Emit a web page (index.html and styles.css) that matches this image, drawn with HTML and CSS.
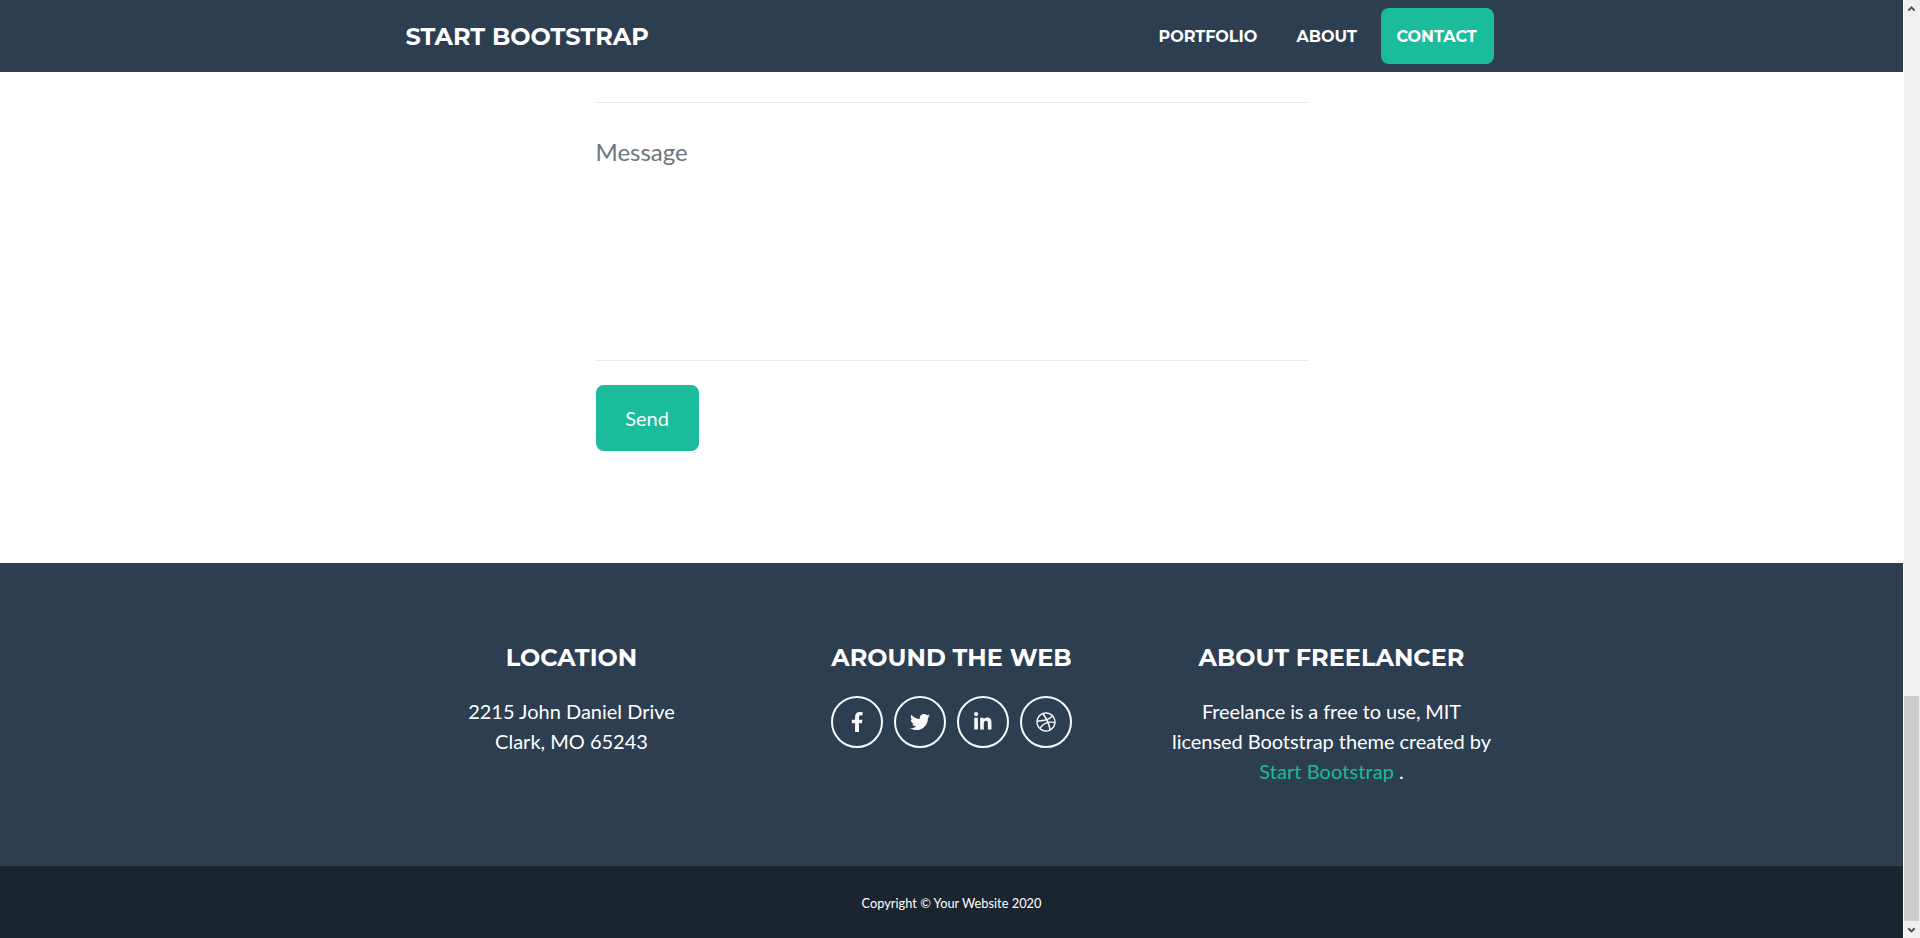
FILE: index.html
```
<!DOCTYPE html>
<html lang="en">
<head>
<meta charset="utf-8">
<title>Freelancer - Start Bootstrap</title>
<link rel="stylesheet" href="styles.css">
</head>
<body>
<div class="viewport">
<div class="page">
<header class="navbar">
<div class="container nav-row">
<a class="brand">START BOOTSTRAP</a>
<nav class="menu"><a class="nav-link portfolio">PORTFOLIO</a><a class="nav-link about">ABOUT</a><a class="nav-link contact">CONTACT</a></nav>
</div>
</header>
<main class="form">
<div class="field-end"></div>
<div class="message">Message</div>
<button class="send">Send</button>
</main>
<footer class="footer">
<div class="container columns">
<section class="col"><h4 class="title location">LOCATION</h4><p class="lead">2215 John Daniel Drive<br>Clark, MO 65243</p></section>
<section class="col"><h4 class="title web">AROUND THE WEB</h4>
<div class="socials">
<a class="social"><svg class="icon" style="width:12.5px" viewBox="0 0 320 512"><path d="M279.14 288l14.22-92.66h-88.91v-60.13c0-25.35 12.42-50.06 52.24-50.06h40.42V6.26S260.43 0 225.36 0c-73.22 0-121.08 44.38-121.08 124.72v70.62H22.89V288h81.39v224h100.17V288z"/></svg></a>
<a class="social"><svg class="icon" style="width:20px" viewBox="0 0 512 512"><path d="M459.37 151.716c.325 4.548.325 9.097.325 13.645 0 138.72-105.583 298.558-298.558 298.558-59.452 0-114.68-17.219-161.137-47.106 8.447.974 16.568 1.299 25.34 1.299 49.055 0 94.213-16.568 130.274-44.832-46.132-.975-84.792-31.188-98.112-72.772 6.498.974 12.995 1.624 19.818 1.624 9.421 0 18.843-1.3 27.614-3.573-48.081-9.747-84.143-51.98-84.143-102.985v-1.299c13.969 7.797 30.214 12.67 47.431 13.319-28.264-18.843-46.781-51.005-46.781-87.391 0-19.492 5.197-37.36 14.294-52.954 51.655 63.675 129.3 105.258 216.365 109.807-1.624-7.797-2.599-15.918-2.599-24.04 0-57.828 46.782-104.934 104.934-104.934 30.213 0 57.502 12.67 76.67 33.137 23.715-4.548 46.456-13.32 66.599-25.34-7.798 24.366-24.366 44.833-46.132 57.827 21.117-2.273 41.584-8.122 60.426-16.243-14.292 20.791-32.161 39.308-52.628 54.253z"/></svg></a>
<a class="social"><svg class="icon" style="width:17.5px" viewBox="0 0 448 512"><path d="M100.28 448H7.4V148.9h92.88zM53.79 108.1C24.09 108.1 0 83.5 0 53.8a53.79 53.79 0 0 1 107.58 0c0 29.7-24.1 54.3-53.79 54.3zM447.9 448h-92.68V302.4c0-34.7-.7-79.2-48.29-79.2-48.29 0-55.69 37.7-55.69 76.7V448h-92.78V148.9h89.08v40.8h1.3c12.4-23.5 42.69-48.3 87.88-48.3 94 0 111.28 61.9 111.28 142.3V448z"/></svg></a>
<a class="social"><svg class="icon" style="width:20px" viewBox="0 0 512 512"><path d="M256 8C119.252 8 8 119.252 8 256s111.252 248 248 248 248-111.252 248-248S392.748 8 256 8zm163.97 114.366c29.503 36.046 47.369 81.957 47.835 131.955-6.984-1.477-77.018-15.682-147.502-6.818-5.752-14.041-11.181-26.393-18.617-41.614 78.321-31.977 113.818-77.482 118.284-83.523zM396.421 97.87c-3.81 5.427-35.697 48.286-111.021 76.519-34.712-63.776-73.185-116.168-79.04-124.008 67.176-16.193 137.966 1.27 190.061 47.489zm-230.48-33.25c5.585 7.659 43.438 60.116 78.537 122.509-99.087 26.313-186.36 25.934-195.834 25.809C62.38 147.205 106.678 92.573 165.941 64.62zM44.17 256.323c0-2.166.043-4.322.108-6.473 9.268.19 111.92 1.513 217.706-30.146 6.064 11.868 11.857 23.915 17.174 35.949-76.599 21.575-146.194 83.527-180.531 142.306C64.794 360.405 44.17 310.73 44.17 256.323zm81.807 167.113c22.127-45.233 82.178-103.622 167.579-132.756 29.74 77.283 42.039 142.053 45.189 160.638-68.112 29.013-150.015 21.053-212.768-27.882zm248.38 8.489c-2.171-12.886-13.446-74.897-41.152-151.033 66.38-10.626 124.7 6.768 131.947 9.055-9.442 58.941-43.273 109.844-90.795 141.978z"/></svg></a>
</div></section>
<section class="col"><h4 class="title freelancer">ABOUT FREELANCER</h4><p class="lead"><span class="line-first">Freelance is a free to use, MIT</span><br><span class="line-second">licensed Bootstrap theme created by</span><br><a class="link">Start Bootstrap</a> .</p></section>
</div>
</footer>
<div class="copyright">Copyright © Your Website 2020</div>
</div>
<aside class="scrollbar">
<svg class="arrow" viewBox="0 0 16 17"><path d="M4.3 10.6 7.5 7.4l3.2 3.2"/></svg>
<div class="track"><div class="thumb"></div></div>
<svg class="arrow" viewBox="0 0 16 17"><path d="M4.3 7.2 7.5 10.4l3.2-3.2"/></svg>
</aside>
</div>
</body>
</html>
```
FILE: styles.css
```
* { box-sizing: border-box; }
body { margin: 0; background: #fff; font-family: Lato, sans-serif; overflow: hidden; }
.viewport { display: flex; width: 1920px; height: 938px; }
.page { width: 1903px; display: flex; flex-direction: column; }
.container { width: 1140px; margin: 0 auto; }
.navbar { height: 72px; background: #2c3e50; color: #fff; font-family: Montserrat, Inter, sans-serif; font-weight: 700; }
.nav-row { height: 72px; padding: 0 24px; display: flex; align-items: center; justify-content: space-between; }
.brand { font-size: 24px; line-height: 36px; padding-top: 1px; white-space: nowrap; }
.menu { display: flex; gap: 8px; margin-right: 4px; }
.nav-link { height: 56px; padding: 1px 16px 0; line-height: 56px; font-size: 16px; border-radius: 8px; white-space: nowrap; }
.contact { background: #1abc9c; width: 113px; }
.about { width: 92px; }
.portfolio { width: 130px; }
.form { width: 712px; height: 491px; margin-left: 596px; }
.field-end { height: 31px; border-bottom: 1px solid #e9ecef; }
.message { height: 258px; border-bottom: 1px solid #e9ecef; padding-top: 31px; font-size: 24px; line-height: 36px; color: #6c757d; text-indent: -0.5px; }
.send { display: block; margin-top: 24px; width: 103px; height: 66px; padding: 0 1px 0 0; border: 0; border-radius: 8px; background: #1abc9c; color: #fff; font: 20px/30px Lato, sans-serif; }
.footer { height: 303px; padding-top: 80px; background: #2c3e50; color: #fff; }
.columns { display: grid; grid-template-columns: repeat(3, 1fr); text-align: center; }
.title { margin: 0 0 24px; font: 700 24px/29px Montserrat, Inter, sans-serif; white-space: nowrap; }
.lead { margin: 0; font-size: 20px; line-height: 30px; }
.line-first { letter-spacing: -0.12px; }
.line-second { letter-spacing: -0.06px; }
.link { color: #1abc9c; letter-spacing: 0.08px; }
.socials { display: flex; justify-content: center; gap: 11px; }
.social { width: 52px; height: 52px; border: 2px solid #f8f9fa; border-radius: 50%; display: flex; align-items: center; justify-content: center; }
.icon { height: 20px; fill: #f8f9fa; }
.copyright { height: 72px; background: #1a252f; color: #fff; text-align: center; font-size: 12.8px; line-height: 74px; }
.scrollbar { width: 17px; background: #f0f0f0; display: flex; flex-direction: column; border-left: 1px solid #fff; }
.arrow { width: 16px; height: 17px; fill: none; stroke: #505050; stroke-width: 2; }
.track { flex: 1; padding: 679px 1px 0 0; }
.thumb { height: 225px; background: #cdcdcd; }
```
